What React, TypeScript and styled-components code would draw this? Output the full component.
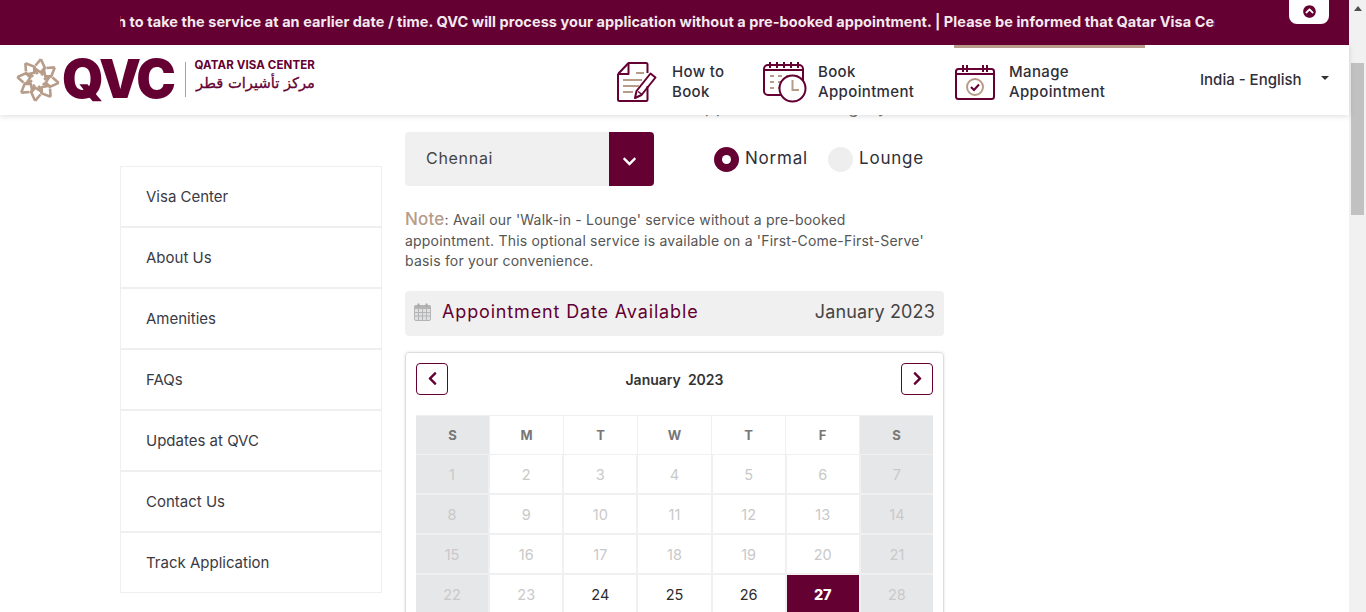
import styled, { createGlobalStyle } from 'styled-components';
import { FaChevronDown, FaChevronLeft, FaChevronRight, FaChevronCircleUp } from 'react-icons/fa';

const MAROON = '#640032';
const TAN = '#b79c8a';

const GlobalStyle = createGlobalStyle`
  html, body {
    margin: 0;
    height: 100%;
    overflow: hidden;
    background: #fff;
    font-family: Inter, "Noto Sans", sans-serif;
    color: #333;
  }
`;

const Page = styled.div`
  display: flex;
  height: 612px;
  overflow: hidden;
`;

const Viewport = styled.div`
  flex: 1;
  min-width: 0;
  display: flex;
  flex-direction: column;
`;

const Rail = styled.div`
  width: 17px;
  background: #f1f1f1;
  display: flex;
  flex-direction: column;
  align-items: center;
`;

const RailArrow = styled.div`
  margin-top: 6px;
  width: 0;
  height: 0;
  border-left: 4px solid transparent;
  border-right: 4px solid transparent;
  border-bottom: 5px solid #505050;
`;

const RailThumb = styled.div`
  margin-top: 52px;
  width: 13px;
  height: 152px;
  background: #c1c1c1;
`;

const TickerBar = styled.div`
  flex: none;
  height: 45px;
  background: ${MAROON};
  display: flex;
  padding-left: 120px;
  position: relative;
  z-index: 3;
`;

const TickerClip = styled.div`
  width: 1095px;
  overflow: hidden;
  display: flex;
  align-items: center;
  height: 42px;
`;

const TickerText = styled.span`
  white-space: nowrap;
  font-size: 14.5px;
  font-weight: 700;
  letter-spacing: 0.06px;
  color: #f3e9ee;
  margin-left: -3px;
`;

const TickerTab = styled.button`
  margin-left: 74px;
  width: 40px;
  height: 24px;
  border: 0;
  padding: 0 0 2px;
  background: #fff;
  border-radius: 0 0 8px 8px;
  color: ${MAROON};
  font-size: 13px;
  display: flex;
  align-items: center;
  justify-content: center;
`;

const Header = styled.header`
  flex: none;
  height: 70px;
  background: #fff;
  display: flex;
  padding-left: 16px;
  box-shadow: 0 1px 6px rgba(0, 0, 0, 0.14);
  position: relative;
  z-index: 2;
`;

const Logo = styled.div`
  display: flex;
  align-items: center;
  padding-bottom: 1px;
`;

const LogoMark = styled.span`
  font-size: 53px;
  line-height: 1;
  font-weight: 900;
  letter-spacing: -2.4px;
  color: ${MAROON};
  margin-left: 2px;
`;

const LogoDivider = styled.div`
  width: 1px;
  height: 35px;
  background: ${TAN};
  margin: 0 8px 0 12px;
`;

const LogoWords = styled.div`
  display: flex;
  flex-direction: column;
  gap: 1px;
  padding-bottom: 8px;
  color: ${MAROON};
`;

const LogoEn = styled.span`
  font-size: 11.5px;
  font-weight: 700;
  white-space: nowrap;
  letter-spacing: 0.12px;
`;

const LogoAr = styled.span`
  font-family: "DejaVu Sans", sans-serif;
  font-size: 14.7px;
  -webkit-text-stroke: 0.3px ${MAROON};
  line-height: 20px;
  white-space: nowrap;
  text-align: right;
`;

const Nav = styled.nav`
  margin-left: auto;
  display: flex;
`;

const NavItem = styled.a<{ $width: number; $gap: number; $active?: boolean }>`
  width: ${(p) => p.$width}px;
  box-sizing: border-box;
  display: flex;
  align-items: center;
  gap: ${(p) => p.$gap}px;
  padding-left: 1px;
  border-top: 3px solid ${(p) => (p.$active ? TAN : 'transparent')};
`;

const NavLabel = styled.span`
  font-size: 15px;
  line-height: 20px;
  font-weight: 500;
  color: #2f2f3a;
  letter-spacing: 0.35px;
`;

const Lang = styled.div`
  width: 204px;
  box-sizing: border-box;
  display: flex;
  align-items: center;
  padding: 0 20px 2px 55px;
  justify-content: space-between;
  font-size: 15px;
  font-weight: 500;
  color: #2f2f3a;
`;

const Caret = styled.span`
  width: 0;
  height: 0;
  margin-bottom: 3px;
  border-left: 4.5px solid transparent;
  border-right: 4.5px solid transparent;
  border-top: 4.5px solid #333;
`;

const Content = styled.main`
  flex: 1;
  min-height: 0;
  overflow: hidden;
  display: flex;
  gap: 23px;
  padding-left: 120px;
`;

const SideMenu = styled.ul`
  flex: none;
  width: 262px;
  box-sizing: border-box;
  height: 427px;
  margin: 51px 0 0;
  padding: 0;
  list-style: none;
  border: 1px solid #efefef;
`;

const SideItem = styled.li`
  height: 61px;
  box-sizing: border-box;
  display: flex;
  align-items: center;
  padding-left: 25px;
  font-size: 15px;
  color: #3a3a44;
  border-bottom: 2px solid #efefef;

  &:last-child {
    border-bottom: 0;
    padding-bottom: 2px;
  }
`;

const Column = styled.div`
  flex: none;
  width: 539px;
  margin-top: -18px;
`;

const LabelRow = styled.div`
  display: flex;
  justify-content: space-between;
  height: 20px;
  padding-right: 56px;
  font-size: 17px;
  line-height: 20px;
  letter-spacing: 0.7px;
  color: #777;
`;

const Choices = styled.div`
  display: flex;
  align-items: center;
  margin-top: 15px;
`;

const SelectBox = styled.div`
  width: 249px;
  height: 54px;
  border-radius: 4px;
  background: #f0f0f0;
  display: flex;
  align-items: center;
  justify-content: space-between;
  padding-left: 21px;
  box-sizing: border-box;
  font-size: 16px;
  letter-spacing: 0.7px;
  color: #444;
`;

const SelectText = styled.span`
  margin-bottom: 3px;
`;

const SelectButton = styled.div`
  width: 45px;
  height: 100%;
  background: ${MAROON};
  border-radius: 0 4px 4px 0;
  color: #fff;
  font-size: 15px;
  display: flex;
  align-items: center;
  justify-content: center;
  padding: 5px 4px 0 0;
  box-sizing: border-box;
`;

const RadioGroup = styled.div`
  display: flex;
  align-items: center;
  margin-left: 60px;
`;

const RadioDot = styled.span<{ $on?: boolean }>`
  width: 25px;
  height: 25px;
  border-radius: 50%;
  background: ${(p) => (p.$on ? MAROON : '#eee')};
  display: flex;
  align-items: center;
  justify-content: center;
  margin-right: 6px;

  &::after {
    content: '';
    width: 9px;
    height: 9px;
    border-radius: 50%;
    background: ${(p) => (p.$on ? '#fff' : 'transparent')};
  }
`;

const RadioLabel = styled.span`
  font-size: 17px;
  color: #2f2f3a;
  width: 83px;
  letter-spacing: 0.8px;
  margin-bottom: 2px;
`;

const Note = styled.p`
  margin: 24px 0 0;
  font-size: 14px;
  line-height: 20.5px;
  letter-spacing: 0.2px;
  color: #555;
  width: 530px;
`;

const NoteLead = styled.span`
  font-size: 17px;
  font-weight: 500;
  line-height: 1;
  color: ${TAN};
`;

const DateBar = styled.div`
  margin-top: 19px;
  height: 45px;
  box-sizing: border-box;
  border-radius: 4px;
  background: #f0f0f0;
  display: flex;
  align-items: center;
  padding: 0 9px 3px;
  font-size: 18px;
`;

const DateBarTitle = styled.span`
  margin-left: 11px;
  color: ${MAROON};
  letter-spacing: 0.85px;
`;

const DateBarMonth = styled.span`
  margin-left: auto;
  color: #444;
  letter-spacing: 0.15px;
`;

const Calendar = styled.section`
  margin-top: 16px;
  box-sizing: border-box;
  height: 300px;
  border: 1px solid #ddd;
  border-radius: 4px;
  box-shadow: 0 0 3px rgba(0, 0, 0, 0.12);
  padding: 10px 10px 0;
`;

const CalendarHead = styled.div`
  display: flex;
  align-items: center;
  justify-content: space-between;
`;

const CalendarTitle = styled.span`
  font-size: 14px;
  font-weight: 600;
  color: #333;
  white-space: pre;
  padding-top: 2px;
`;

const ArrowButton = styled.button`
  width: 32px;
  height: 32px;
  padding: 0;
  background: #fff;
  border: 1px solid ${MAROON};
  border-radius: 4px;
  color: ${MAROON};
  font-size: 15px;
  display: flex;
  align-items: center;
  justify-content: center;
`;

const DayGrid = styled.div<{ $head?: boolean }>`
  display: grid;
  grid-template-columns: repeat(7, 1fr);
  gap: ${(p) => (p.$head ? 1 : 2)}px;
  background: #f0f0f0;
  margin-top: ${(p) => (p.$head ? '20px' : '0')};
  border-top: ${(p) => (p.$head ? '1px solid #f0f0f0' : '0')};
  padding-bottom: ${(p) => (p.$head ? '1px' : '0')};
`;

const HeadCell = styled.div<{ $weekend?: boolean }>`
  height: 38px;
  display: flex;
  align-items: center;
  justify-content: center;
  font-size: 13px;
  font-weight: 700;
  color: #777;
  background: ${(p) => (p.$weekend ? '#e6e7e8' : '#fff')};
`;

const DayCell = styled.div<{ $weekend?: boolean; $open?: boolean; $picked?: boolean }>`
  height: 38px;
  box-sizing: border-box;
  padding-top: 1px;
  display: flex;
  align-items: center;
  justify-content: center;
  font-size: 14.5px;
  font-weight: ${(p) => (p.$picked ? 800 : 400)};
  color: ${(p) => (p.$picked ? '#fff' : p.$open ? '#2c2c2c' : '#c9c9c9')};
  background: ${(p) => (p.$picked ? MAROON : p.$weekend ? '#e6e7e8' : '#fff')};
`;

const STAR_ARMS = [0, 45, 90, 135, 180, 225, 270, 315];

const StarLogo = () => (
  <svg width="44" height="44" viewBox="-22 -22 44 44" fill="none" stroke={TAN} strokeWidth="2.6">
    {STAR_ARMS.map((a) => (
      <g key={a} transform={`rotate(${a + 8})`}>
        <path d="M0 -21 L5 -13 L1.5 -8 L-5 -11" />
        <path d="M0 -21 L-4.5 -14" />
        <path d="M5 -13 L3 -5" />
      </g>
    ))}
  </svg>
);

const DocIcon = () => (
  <svg width="40" height="40" viewBox="0 0 40 40" fill="none" stroke={MAROON} strokeWidth="2" strokeLinejoin="round">
    <path d="M1 12 L11.500 1 H29 Q30.500 1 30.500 2.500 V11" />
    <path d="M1 12 V37.500 Q1 39 2.500 39 H29 Q30.500 39 30.500 37.500 V24" />
    <path d="M1 12 H11.500 V1" />
    <path d="M18 36 L19.500 29 L33.500 11.500 L38.500 15.500 L24.500 33 Z" />
    <path d="M21 29.500 L25 32.500" strokeWidth="1.500" />
    <path d="M19 11 H27 M6 18 H25 M6 24 H22 M6 30 H16" stroke={TAN} />
  </svg>
);

const CalendarClockIcon = () => (
  <svg width="44" height="42" viewBox="0 0 44 42" fill="none" stroke={MAROON} strokeWidth="2">
    <rect x="1" y="4" width="39" height="30" rx="4" />
    <path d="M1 9 H40" />
    <path d="M7 1 V7 M14 1 V7 M21 1 V7 M28 1 V7 M35 1 V7" />
    <path d="M7 15 H11 M15 15 H19 M23 15 H27 M31 15 H35 M7 21 H11 M15 21 H19 M23 21 H27 M7 27 H11 M15 27 H19" stroke={TAN} />
    <circle cx="29.500" cy="27.500" r="13" fill="#fff" />
    <path d="M29.500 19 V29 H36" stroke={TAN} />
  </svg>
);

const CalendarCheckIcon = () => (
  <svg width="40" height="36" viewBox="0 0 40 36" fill="none" stroke={MAROON} strokeWidth="2">
    <rect x="1" y="5" width="38" height="30" rx="2.500" />
    <path d="M1 10 H39" />
    <path d="M8 1 V8 M12 1 V8 M28 1 V8 M32 1 V8" />
    <circle cx="20" cy="23" r="8" stroke={TAN} />
    <path d="M16 23 L19 26 L24 20.500" />
  </svg>
);

const SmallCalendar = () => (
  <svg width="17" height="18" viewBox="0 0 17 18" fill="none">
    <rect x="0.500" y="2.500" width="16" height="15" rx="1.500" fill="#dfe0e2" stroke="#b4b4b4" />
    <path d="M0.500 2.500 H16.500 V6 H0.500 Z" fill="#b4b4b4" />
    <path d="M4.500 6 V17 M8.500 6 V17 M12.500 6 V17 M1 9.500 H16 M1 13 H16" stroke="#b4b4b4" />
    <path d="M4.500 0.500 V4 M12.500 0.500 V4" stroke="#a8a8a8" strokeWidth="2" />
  </svg>
);

const sideLinks = ['Visa Center', 'About Us', 'Amenities', 'FAQs', 'Updates at QVC', 'Contact Us', 'Track Application'];
const weekdays = ['S', 'M', 'T', 'W', 'T', 'F', 'S'];
const days = Array.from({ length: 28 }, (_, i) => i + 1);

const App = () => (
  <Page>
    <GlobalStyle />
    <Viewport>
      <TickerBar>
        <TickerClip>
          <TickerText>
            h to take the service at an earlier date / time. QVC will process your application without a pre-booked
            appointment. | Please be informed that Qatar Visa Center
          </TickerText>
        </TickerClip>
        <TickerTab>
          <FaChevronCircleUp />
        </TickerTab>
      </TickerBar>
      <Header>
        <Logo>
          <StarLogo />
          <LogoMark>QVC</LogoMark>
          <LogoDivider />
          <LogoWords>
            <LogoEn>QATAR VISA CENTER</LogoEn>
            <LogoAr dir="rtl">مركز تأشيرات قطر</LogoAr>
          </LogoWords>
        </Logo>
        <Nav>
          <NavItem $width={146} $gap={15}>
            <DocIcon />
            <NavLabel>
              How to
              <br />
              Book
            </NavLabel>
          </NavItem>
          <NavItem $width={192} $gap={11}>
            <CalendarClockIcon />
            <NavLabel>
              Book
              <br />
              Appointment
            </NavLabel>
          </NavItem>
          <NavItem $width={191} $gap={14} $active>
            <CalendarCheckIcon />
            <NavLabel>
              Manage
              <br />
              Appointment
            </NavLabel>
          </NavItem>
        </Nav>
        <Lang>
          India - English
          <Caret />
        </Lang>
      </Header>
      <Content>
        <SideMenu>
          {sideLinks.map((link) => (
            <SideItem key={link}>{link}</SideItem>
          ))}
        </SideMenu>
        <Column>
          <LabelRow>
            <span>Qatar Visa Center</span>
            <span>Appointment Category</span>
          </LabelRow>
          <Choices>
            <SelectBox>
              <SelectText>Chennai</SelectText>
              <SelectButton>
                <FaChevronDown />
              </SelectButton>
            </SelectBox>
            <RadioGroup>
              <RadioDot $on />
              <RadioLabel>Normal</RadioLabel>
              <RadioDot />
              <RadioLabel>Lounge</RadioLabel>
            </RadioGroup>
          </Choices>
          <Note>
            <NoteLead>Note</NoteLead>: Avail our 'Walk-in - Lounge' service without a pre-booked appointment. This
            optional service is available on a 'First-Come-First-Serve' basis for your convenience.
          </Note>
          <DateBar>
            <SmallCalendar />
            <DateBarTitle>Appointment Date Available</DateBarTitle>
            <DateBarMonth>January 2023</DateBarMonth>
          </DateBar>
          <Calendar>
            <CalendarHead>
              <ArrowButton>
                <FaChevronLeft />
              </ArrowButton>
              <CalendarTitle>January  2023</CalendarTitle>
              <ArrowButton>
                <FaChevronRight />
              </ArrowButton>
            </CalendarHead>
            <DayGrid $head>
              {weekdays.map((d, i) => (
                <HeadCell key={i} $weekend={i % 7 === 0 || i % 7 === 6}>
                  {d}
                </HeadCell>
              ))}
            </DayGrid>
            <DayGrid>
              {days.map((d, i) => (
                <DayCell
                  key={d}
                  $weekend={i % 7 === 0 || i % 7 === 6}
                  $open={d >= 24 && d <= 26}
                  $picked={d === 27}
                >
                  {d}
                </DayCell>
              ))}
            </DayGrid>
          </Calendar>
        </Column>
      </Content>
    </Viewport>
    <Rail>
      <RailArrow />
      <RailThumb />
    </Rail>
  </Page>
);

export default App;
